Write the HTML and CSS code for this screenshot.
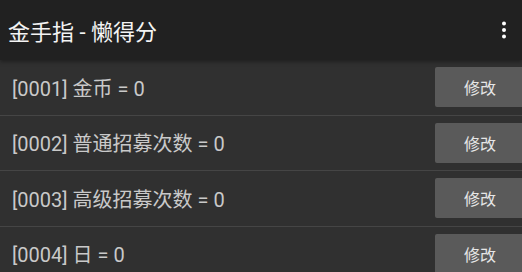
FILE: index.html
```html
<!DOCTYPE html>
<html lang="zh-CN">
<head>
<meta charset="utf-8">
<title>金手指 - 懒得分</title>
<link rel="stylesheet" href="styles.css">
</head>
<body>
<div class="app">
  <header class="toolbar">
    <h1 class="title">金手指 - 懒得分</h1>
    <button class="menu" aria-label="更多">
      <svg width="6" height="18" viewBox="0 0 6 18"><circle cx="3" cy="2.5" r="2" fill="#fff"/><circle cx="3" cy="9" r="2" fill="#fff"/><circle cx="3" cy="15.5" r="2" fill="#fff"/></svg>
    </button>
  </header>
  <ul class="list">
    <li class="row"><span class="label">[0001] 金币 = 0</span><button class="edit">修改</button></li>
    <li class="row"><span class="label">[0002] 普通招募次数 = 0</span><button class="edit">修改</button></li>
    <li class="row"><span class="label">[0003] 高级招募次数 = 0</span><button class="edit">修改</button></li>
    <li class="row"><span class="label">[0004] 日 = 0</span><button class="edit">修改</button></li>
  </ul>
</div>
</body>
</html>
```
FILE: styles.css
```css
html, body {
  margin: 0;
  padding: 0;
  background: #303030;
  overflow: hidden;
}
body {
  width: 522px;
  height: 272px;
  font-family: Roboto, "Noto Sans CJK SC", sans-serif;
}
.app {
  display: flex;
  flex-direction: column;
  height: 100%;
}
.toolbar {
  position: relative;
  z-index: 1;
  height: 60px;
  flex: none;
  display: flex;
  align-items: center;
  justify-content: space-between;
  background: #212121;
  padding: 0 0 0 8px;
  box-shadow: 0 2px 4px rgba(0, 0, 0, 0.35);
}
.title {
  margin: 0;
  font-size: 22px;
  font-weight: 400;
  color: #f4f4f4;
  letter-spacing: 0;
}
.menu {
  background: none;
  border: 0;
  padding: 0;
  width: 28px;
  margin-right: 4px;
  height: 60px;
  display: flex;
  align-items: center;
  justify-content: center;
}
.menu svg {
  display: block;
}
.list {
  list-style: none;
  margin: 0;
  padding: 0;
}
.row {
  height: 54.5px;
  display: flex;
  align-items: center;
  border-bottom: 1px solid #454545;
}
.label {
  flex: 1;
  padding-left: 12px;
  font-size: 20px;
  color: #c9c9c9;
  white-space: nowrap;
}
.edit {
  flex: none;
  width: 90px;
  height: 40px;
  margin-right: -3px;
  border: 0;
  border-radius: 2px;
  background: #5a5a5a;
  color: #e6e6e6;
  font-family: Roboto, "Noto Sans CJK SC", sans-serif;
  font-size: 16px;
  padding: 0;
}
```
